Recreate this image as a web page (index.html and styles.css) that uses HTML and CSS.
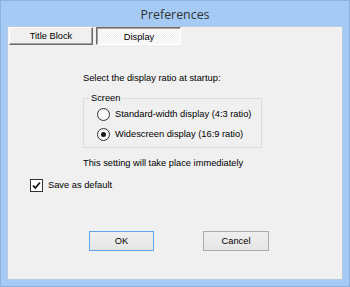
FILE: index.html
```html
<!DOCTYPE html>
<html>
<head>
<meta charset="utf-8">
<link rel="stylesheet" href="styles.css">
</head>
<body>
<div class="window">
  <div class="titlebar">Preferences</div>
  <div class="client">
    <div class="tabs">
      <div class="tab raised">Title Block</div>
      <div class="tab pressed">Display</div>
    </div>
    <div class="panel">
      <p class="prompt">Select the display ratio at startup:</p>
      <fieldset class="group">
        <legend>Screen</legend>
        <label class="option"><span class="radio"></span>Standard-width display (4:3 ratio)</label>
        <label class="option"><span class="radio checked"></span>Widescreen display (16:9 ratio)</label>
      </fieldset>
      <p class="note">This setting will take place immediately</p>
    </div>
    <label class="save"><span class="check"><svg width="11" height="11" viewBox="0 0 11 11"><path d="M2 5.5 L4.3 8 L9 2.5" fill="none" stroke="#111" stroke-width="1.8"/></svg></span>Save as default</label>
    <div class="buttons">
      <button class="btn default">OK</button>
      <button class="btn cancel">Cancel</button>
    </div>
  </div>
</div>
</body>
</html>
```
FILE: styles.css
```css
html, body {
  margin: 0;
  padding: 0;
  background: #a5caf3;
}
.window {
  width: 350px;
  height: 287px;
  box-sizing: border-box;
  background: #a5caf3;
  border: 1px solid #8cb2df;
  display: flex;
  flex-direction: column;
  font-family: "Liberation Sans", Arial, sans-serif;
  font-size: 9.3px;
  color: #000;
}
.titlebar {
  height: 25px;
  display: flex;
  align-items: center;
  justify-content: center;
  font-family: "Open Sans", sans-serif;
  font-size: 12.4px;
  color: #333;
  padding-top: 1px;
  box-sizing: border-box;
}
.client {
  margin: 0 6px;
  height: 254px;
  box-sizing: border-box;
  background: #f0f0f0;
  border: 1px solid #b9cbe0;
  display: flex;
  flex-direction: column;
}
.tabs {
  display: flex;
  gap: 3px;
  padding-left: 1px;
}
.tab {
  height: 18px;
  box-sizing: border-box;
  display: flex;
  align-items: center;
  justify-content: center;
}
.raised {
  width: 84px;
  border: 1px solid;
  border-color: #ffffff #6d6d6d #6d6d6d #ffffff;
  box-shadow: inset -1px -1px #a0a0a0;
  background: #f0f0f0;
}
.pressed {
  width: 85px;
  border: 1px solid;
  border-color: #6d6d6d #ffffff #ffffff #6d6d6d;
  box-shadow: inset 1px 1px #a0a0a0;
  background: repeating-conic-gradient(#ffffff 0 25%, #efefef 0 50%) 0 0 / 2px 2px;
  padding: 1px 0 0 1px;
}
.panel {
  padding-left: 75px;
  display: flex;
  flex-direction: column;
  align-items: flex-start;
}
.prompt {
  margin: 27px 0 0;
  line-height: 12px;
}
.group {
  margin: 8px 0 0;
  width: 179px;
  box-sizing: border-box;
  border: 1px solid #dcdcdc;
  padding: 0 0 3px 5px;
  min-inline-size: 0;
}
.group legend {
  padding: 0 2px;
  line-height: 12px;
}
.option {
  display: flex;
  align-items: center;
  height: 20px;
  margin-left: 8px;
}
.radio {
  width: 13px;
  height: 13px;
  box-sizing: border-box;
  border: 1px solid #333;
  border-radius: 50%;
  background: radial-gradient(circle at 50% 50%, #ffffff 0, #f4f4f4 70%, #e6e6e6 100%);
  margin-right: 5px;
  display: flex;
  align-items: center;
  justify-content: center;
}
.radio.checked::after {
  content: "";
  width: 5px;
  height: 5px;
  border-radius: 50%;
  background: #1a1a1a;
}
.note {
  margin: 9px 0 0;
  line-height: 12px;
}
.save {
  display: flex;
  align-items: center;
  height: 14px;
  margin: 9px 0 0 22px;
}
.check {
  width: 13px;
  height: 13px;
  box-sizing: border-box;
  border: 1px solid #333;
  background: #fff;
  margin-right: 5px;
  display: flex;
  align-items: center;
  justify-content: center;
}
.check svg {
  display: block;
}
.buttons {
  display: flex;
  margin: 39px 0 0 81px;
  gap: 49px;
}
.btn {
  height: 20px;
  box-sizing: border-box;
  border: 1px solid #acacac;
  background: linear-gradient(#efefef, #e5e5e5);
  font-family: "Liberation Sans", Arial, sans-serif;
  font-size: 9.3px;
  color: #000;
  padding: 0;
  margin: 0;
}
.btn.default {
  width: 65px;
  border-color: #5ea6ec;
}
.btn.cancel {
  width: 66px;
}
```
